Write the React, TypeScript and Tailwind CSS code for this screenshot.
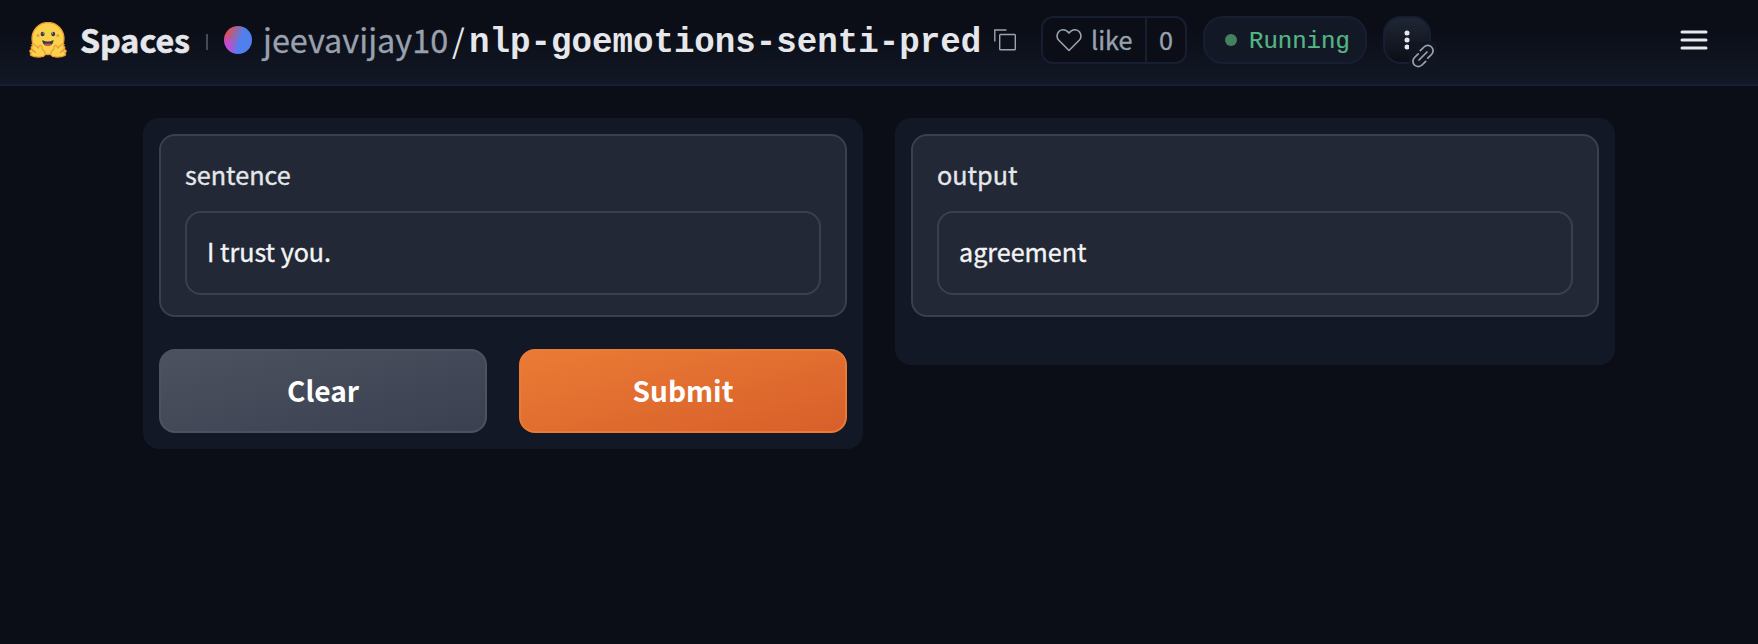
import React from "react";

const sans = "font-['Noto_Sans_CJK_SC',sans-serif]";

function HuggingFace() {
  return (
    <svg viewBox="0 0 38 36" className="h-9 w-[38px] shrink-0">
      <circle cx="19" cy="16.5" r="16" fill="#fbd24b" stroke="#ee9a35" strokeWidth="1.3" />
      <ellipse cx="13.6" cy="12" rx="2" ry="2.2" fill="#3a3b45" />
      <ellipse cx="24.2" cy="12" rx="2" ry="2.2" fill="#3a3b45" />
      <circle cx="14.3" cy="11" r=".6" fill="#fff" />
      <circle cx="23.6" cy="11" r=".6" fill="#fff" />
      <circle cx="9" cy="13.7" r="1.4" fill="#f5903f" />
      <circle cx="28.8" cy="13.7" r="1.4" fill="#f5903f" />
      <path d="M13.3 18q5.6 3 11.2 0c0 3.8-2.4 6-5.6 6s-5.6-2.2-5.6-6Z" fill="#3a3b45" />
      <path d="M15.4 22.3q1.5-1.2 3.5-.3q2-.9 3.5.3q-1.5 1.7-3.5 1.7t-3.5-1.7Z" fill="#ef4e4e" />
      <g fill="#fbd24b" stroke="#ee9a35" strokeWidth="1.2" strokeLinejoin="round" strokeLinecap="round">
        <path d="M6.5 30.5L2.5 26.5q-1-2 1.2-2.2L2.8 22.5q1.2-1.6 3 .2l3.5 3.3q.8-3 2.4-2.6t1.3 3.4l2.5 2.7q2.5 5-4 5.5q-5.5.5-9.5-1.5q-1.5-1.5.5-2.5q-2.2-.8-1.5-2.5t3 .5" />
        <path d="M31.5 30.5l4-4q1-2-1.2-2.2l.9-1.8q-1.2-1.6-3 .2l-3.5 3.3q-.8-3-2.4-2.6t-1.3 3.4l-2.5 2.7q-2.5 5 4 5.5q5.5.5 9.5-1.5q1.5-1.5-.5-2.5q2.2-.8 1.5-2.5t-3 .5" />
      </g>
    </svg>
  );
}

function Field({ label, value }: { label: string; value: string }) {
  return (
    <div className="h-[183px] rounded-2xl border-2 border-[#3a404d] bg-[#222835] px-6 pt-5">
      <label className="block h-9 text-[25.2px] leading-9 text-gray-200 [-webkit-text-stroke:0.35px]">{label}</label>
      <div className="mt-[19px] h-[84px] rounded-2xl border-2 border-[#3a404d] px-5 pt-5 text-[25.1px] leading-9 text-gray-100 [-webkit-text-stroke:0.35px]">
        {value}
      </div>
    </div>
  );
}

export default function App() {
  return (
    <div className={`${sans} h-[644px] overflow-hidden bg-[#0b0e17] text-gray-200`}>
      <header className="flex h-[86px] items-start border-b-2 border-[#171e32] bg-linear-to-b from-[#0b0e17] from-35% to-[#121826] pt-4">
        <div className="flex h-12 w-full items-center pl-[29px] whitespace-nowrap">
          <HuggingFace />
          <span className="ml-[13px] w-[112px] pb-0.5 text-[32.2px] leading-[46px] font-bold [-webkit-text-stroke:0.6px]">Spaces</span>
          <span className="ml-3.5 mt-1 h-4 w-0.5 bg-[#444b58]" />
          <span className="ml-4 size-7 rounded-full bg-[radial-gradient(circle_at_0%_78%,#c644f5_0%,rgba(198,68,245,0.6)_18%,transparent_42%),linear-gradient(112deg,#ea4b4b_12%,#5080ee_56%)]" />
          <span className="ml-[11px] w-[189px] pb-0.5 text-[32.4px] leading-[46px] text-gray-400 [-webkit-text-stroke:0.3px]">jeevavijay10</span>
          <span className="w-[17px] pb-0.5 text-[32.4px] leading-[46px]">/</span>
          <h1 className="w-[512px] pt-1.5 font-['Liberation_Mono',monospace] text-[34.15px] leading-12 font-bold">
            nlp-goemotions-senti-pred
          </h1>
          <svg viewBox="0 0 22 22" className="ml-[13px] size-[22px] shrink-0" fill="none" stroke="#9ca3af" strokeWidth="1.4">
            <path d="M.8 12.5V1h11.7" />
            <rect x="5.7" y="5.5" width="15.6" height="15.2" rx=".8" />
          </svg>
          <div className="ml-[25px] flex h-12 w-[146px] shrink-0 rounded-xl border-2 border-[#171e32] bg-[#0b0e17] text-gray-400">
            <div className="flex w-[104px] items-center border-r-2 border-[#171e32] pl-[13px]">
              <svg viewBox="0 0 26 24" className="h-6 w-[26px] shrink-0" fill="none" stroke="#9ca3af" strokeWidth="1.6" strokeLinejoin="round">
                <path d="M13 22.5L2.8 12.3C-.4 9 1 2.2 7 1.7c2.8-.1 4.4 1.2 6 3.3c1.6-2.1 3.2-3.4 6-3.3c6 .5 7.4 7.3 4.2 10.6Z" />
              </svg>
              <span className="pb-0.5 pl-[9px] text-[25.2px] leading-10 [-webkit-text-stroke:0.35px]">like</span>
            </div>
            <span className="w-[38px] text-center text-[25.2px] leading-[42px] [-webkit-text-stroke:0.35px]">0</span>
          </div>
          <div className="ml-4 flex h-12 w-[164px] shrink-0 items-center rounded-[20px] border-2 border-[#171e32] bg-[#121826] pl-5 font-['Liberation_Mono',monospace] text-[24px] text-[#55b685]">
            <span className="mr-3 size-3 rounded-full bg-[#43815f]" />
            <span className="pt-1 leading-9 [-webkit-text-stroke:0.2px]">Running</span>
          </div>
          <div className="relative ml-4 flex size-12 shrink-0 items-center justify-center rounded-[18px] border-2 border-[#171e32] bg-linear-to-b from-[#1f2734] to-[#0b0e17]">
            <svg viewBox="0 0 6 20" className="h-5 w-1.5" fill="#e5e7eb">
              <circle cx="3" cy="3" r="2.5" />
              <circle cx="3" cy="10" r="2.5" />
              <circle cx="3" cy="17" r="2.5" />
            </svg>
            <div className="absolute top-6 left-6 flex size-7 items-center justify-center rounded bg-[#101521]">
              <svg viewBox="0 0 24 24" className="size-6" fill="none" stroke="#9ca3af" strokeWidth="1.7" strokeLinecap="round">
                <path d="M9.3 6.7l3.700-3.700a5 5 0 0 1 7.500 7.500l-3.700 3.700M14.700 17.300l-3.700 3.700a5 5 0 0 1-7.500-7.500l3.700-3.700M8 16l8-8" />
              </svg>
            </div>
          </div>
          <svg viewBox="0 0 28 22" className="mr-[50px] ml-auto h-[22px] w-7" stroke="#e5e7eb" strokeWidth="3" strokeLinecap="round">
            <path d="M2 3h24M2 11h24M2 19h24" />
          </svg>
        </div>
      </header>
      <main className="flex items-start gap-8 px-[143px] pt-8">
        <section className="h-[331px] flex-1 rounded-2xl bg-[#121826] p-4">
          <Field label="sentence" value="I trust you." />
          <div className="mt-8 flex gap-8 text-[28.1px] leading-10 font-bold text-white">
            <button className="h-[84px] flex-1 rounded-2xl border-2 border-[#4b5260] bg-linear-to-br from-[#4c525f] to-[#3a4050] pb-0.5">Clear</button>
            <button className="h-[84px] flex-1 rounded-2xl border-2 border-[#e97b35] bg-linear-to-br from-[#ea7b35] to-[#d85f2a] pb-0.5">Submit</button>
          </div>
        </section>
        <section className="h-[247px] flex-1 rounded-2xl bg-[#121826] p-4">
          <Field label="output" value="agreement" />
        </section>
      </main>
    </div>
  );
}
